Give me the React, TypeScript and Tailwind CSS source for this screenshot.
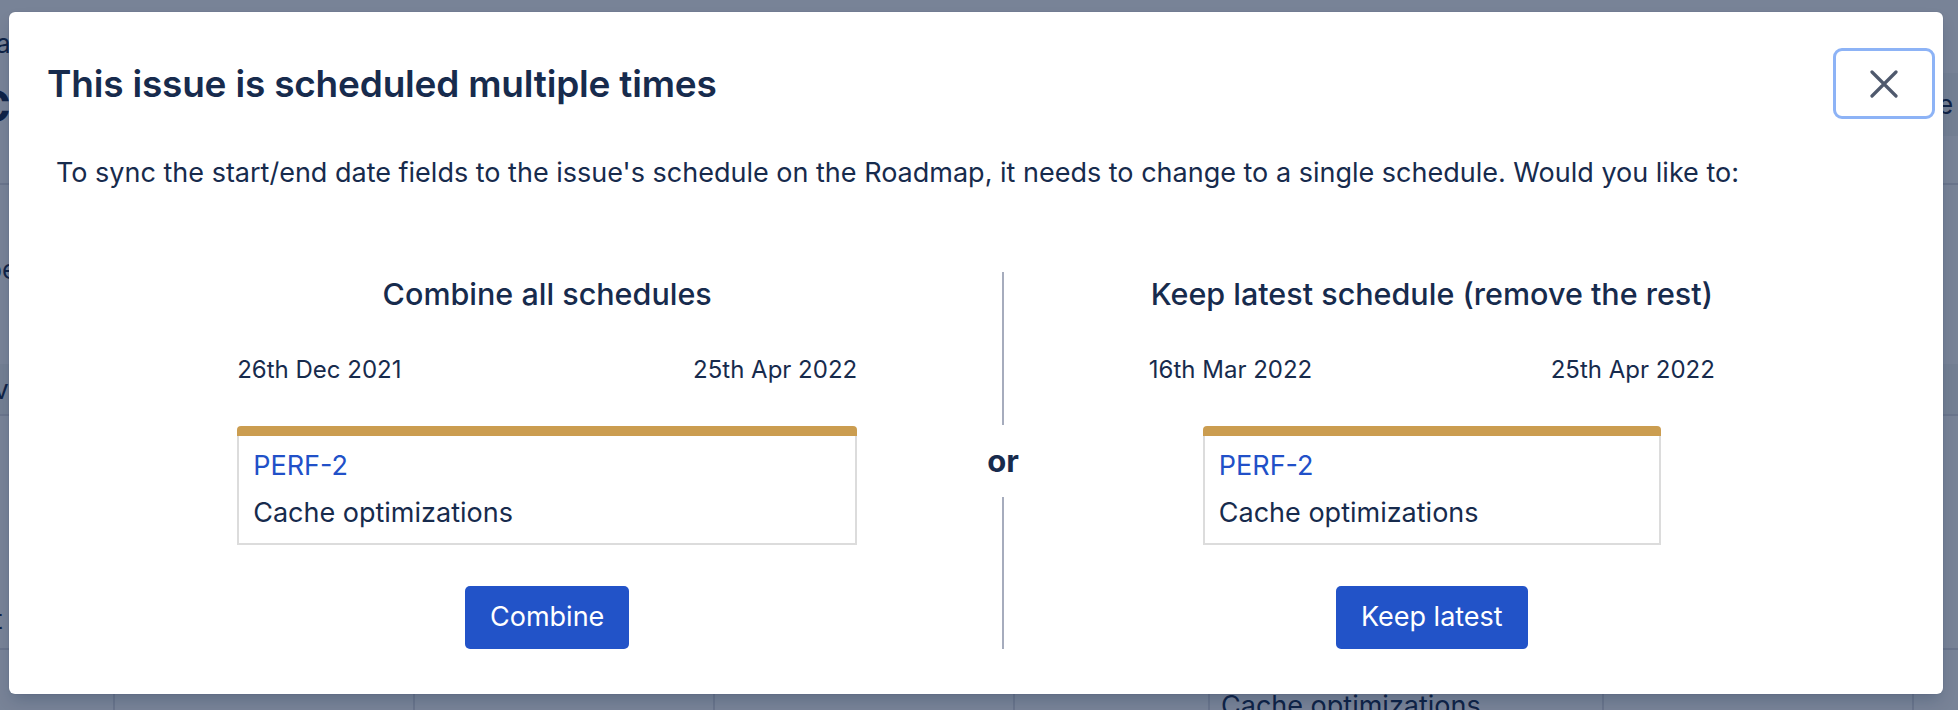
import React from 'react';

const dates = {
  combine: { start: '26th Dec 2021', end: '25th Apr 2022' },
  latest: { start: '16th Mar 2022', end: '25th Apr 2022' },
};

export default function App() {
  return (
    <div className="relative h-[710px] w-full overflow-hidden bg-white font-['Inter',sans-serif] text-[#172b4d]">
      {/* page behind the dialog */}
      <div className="flex flex-col">
        <div className="flex h-[185px] justify-between border-b-2 border-[#dfe1e6]">
          <div className="flex flex-col">
            <span className="ml-[-4px] mt-[28px] text-[26px] leading-[32px]">a</span>
            <span className="ml-[-22px] mt-[21px] text-[44px] font-bold leading-[50px]">C</span>
          </div>
          <div className="mt-[73px] flex h-[63px] w-[24px] items-center bg-[#f4f5f7] pl-[4px] text-[26px]">e</div>
        </div>
        <div className="flex h-[231px] flex-col border-b-2 border-[#dfe1e6]">
          <span className="ml-[-14px] mt-[69px] text-[26px] leading-[32px]">pe</span>
          <div className="mt-auto flex h-[50px] items-center bg-[#f4f5f7] text-[26px]">
            <span className="ml-[-6px]">v</span>
          </div>
        </div>
        <div className="flex h-[234px] flex-col border-b-2 border-[#dfe1e6]">
          <span className="ml-[-6px] mt-auto mb-[12px] text-[26px] leading-[32px]">t</span>
        </div>
        <div className="flex h-[60px]">
          <div className="w-[115px] border-r-2 border-[#dfe1e6]" />
          <div className="w-[300px] border-r-2 border-[#dfe1e6]" />
          <div className="w-[300px] border-r-2 border-[#dfe1e6]" />
          <div className="w-[300px] border-r-2 border-[#dfe1e6]" />
          <div className="w-[193px]" />
          <div className="w-[396px] border-x-2 border-[#dfe1e6] pl-[11px] pt-[40px] text-[27px] leading-[32px]">Cache optimizations</div>
          <div className="w-[310px] border-r-2 border-[#dfe1e6]" />
        </div>
      </div>

      <div className="absolute inset-0 bg-[#091e42]/55" />

      {/* dialog */}
      <div className="absolute inset-0 pl-[9px] pr-[15px] pt-[12px]">
        <div className="flex flex-col rounded-[6px] bg-white shadow-[0_8px_16px_-4px_rgba(9,30,66,0.25),0_0_1px_rgba(9,30,66,0.31)]">
          <div className="flex items-center justify-between pl-[38px] pr-[8px] pt-[36px]">
            <h1 className="text-[37px] font-semibold leading-[46px] tracking-[-0.2px]">This issue is scheduled multiple times</h1>
            <button className="flex h-[71px] w-[102px] items-center justify-center rounded-[9px] border-[3px] border-[#8db3f6] bg-white">
              <svg width="28" height="28" viewBox="0 0 28 28" fill="none" stroke="#4f596d" strokeWidth="3.2" strokeLinecap="round">
                <path d="M2 2 26 26M26 2 2 26" />
              </svg>
            </button>
          </div>

          <p className="mt-[38px] pl-[47px] text-[27px] leading-[32px]">
            To sync the start/end date fields to the issue's schedule on the Roadmap, it needs to change to a single schedule. Would you like to:
          </p>

          <div className="mt-[83px] flex justify-center gap-[130px] pb-[45px]">
            <Option
              heading="Combine all schedules"
              start={dates.combine.start}
              end={dates.combine.end}
              width="w-[620px]"
              cardWidth="w-[620px]"
              action="Combine"
            />
            <div className="flex flex-col items-center self-stretch">
              <div className="w-[2px] flex-1 bg-[#a6acbd]" />
              <div className="flex h-[72px] items-center text-[31px] font-bold leading-none">or</div>
              <div className="w-[2px] flex-1 bg-[#a6acbd]" />
            </div>
            <Option
              heading="Keep latest schedule (remove the rest)"
              start={dates.latest.start}
              end={dates.latest.end}
              width="w-[566px]"
              cardWidth="w-[458px]"
              action="Keep latest"
            />
          </div>
        </div>
      </div>
    </div>
  );
}

function Option({ heading, start, end, width, cardWidth, action }: {
  heading: string; start: string; end: string; width: string; cardWidth: string; action: string;
}) {
  return (
    <div className={`flex flex-col items-center ${width}`}>
      <h2 className="mt-[4px] whitespace-nowrap text-[30.5px] font-medium leading-[36px]">{heading}</h2>
      <div className="mt-[43px] flex w-full justify-between text-[24px] leading-[30px]">
        <span>{start}</span>
        <span>{end}</span>
      </div>
      <div className={`mt-[41px] flex flex-col ${cardWidth}`}>
        <div className="h-[10px] rounded-t-[4px] bg-[#cb9d50]" />
        <div className="flex flex-col border-x-2 border-b-2 border-[#dcdcdc] pb-[14px] pl-[14px] pt-[14px] text-[27px] leading-[32px]">
          <span className="text-[#2150c8]">PERF-2</span>
          <span className="mt-[15px]">Cache optimizations</span>
        </div>
      </div>
      <button className="mt-[41px] h-[63px] rounded-[5px] bg-[#2253c8] px-[25px] text-[27px] text-white">{action}</button>
    </div>
  );
}
